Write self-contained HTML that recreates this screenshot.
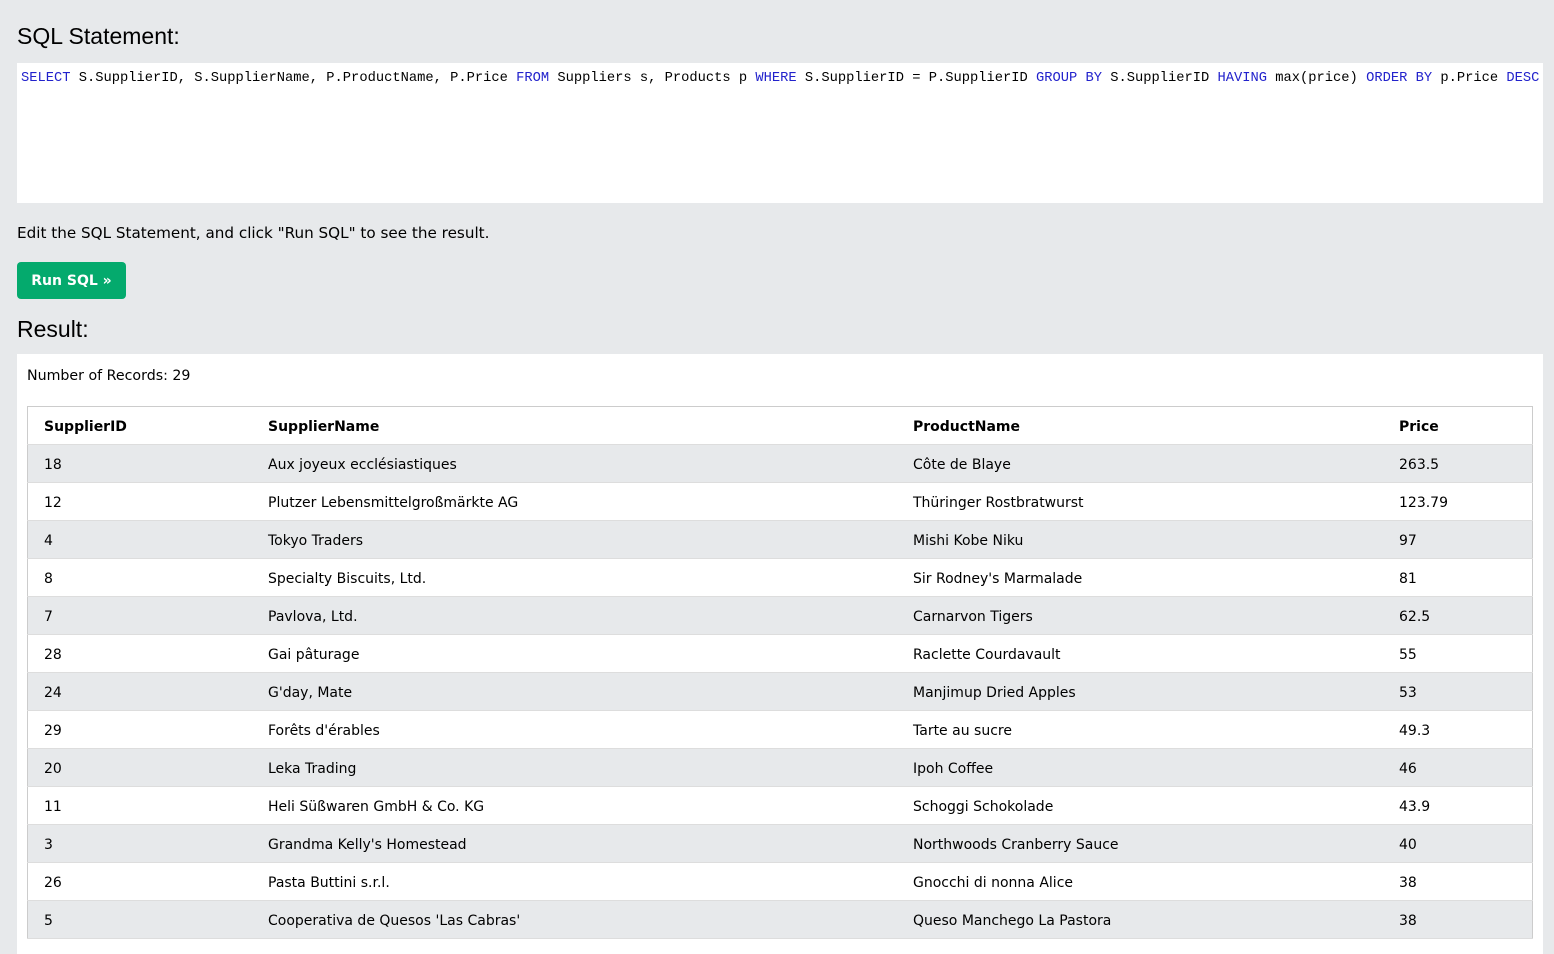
<!DOCTYPE html>
<html><head><meta charset="utf-8"><style>
body{margin:0;background:#e7e9eb;width:1554px;height:940px;overflow:hidden;font-family:"DejaVu Sans",Verdana,sans-serif;font-size:14px;color:#000}
h2{position:absolute;margin:0;font-family:"Liberation Sans",sans-serif;font-weight:normal;font-size:23px;left:17px}
#ta{position:absolute;left:17px;top:63px;width:1526px;height:140px;background:#fff}
#ta pre{margin:0;position:absolute;left:4px;top:8px;font-family:"Liberation Mono",monospace;font-size:13.75px;color:#000;white-space:pre}
.k{color:#2222cc}
#hint{position:absolute;left:17px;top:224px;font-size:15.2px}
#btn{position:absolute;left:17px;top:262px;width:109px;height:37px;background:#04aa6d;border-radius:4px;color:#fff;font-weight:bold;font-size:14px;line-height:38px;text-align:center}
#res{position:absolute;left:17px;top:354px;width:1526px;height:600px;background:#fff}
#num{position:absolute;left:10px;top:14px;font-size:14.2px}
table{position:absolute;left:10px;top:52px;width:1506px;border-collapse:collapse;border:1px solid #ccc}
td,th{height:35px;padding:2px 0 0 16px;text-align:left;border-bottom:1px solid #ddd}
th{font-weight:bold}
tr:nth-child(even) td{background:#e7e9eb}
</style></head><body>
<h2 style="top:23px">SQL Statement:</h2>
<div id="ta"><pre><span class="k">SELECT</span> S.SupplierID, S.SupplierName, P.ProductName, P.Price <span class="k">FROM</span> Suppliers s, Products p <span class="k">WHERE</span> S.SupplierID = P.SupplierID <span class="k">GROUP BY</span> S.SupplierID <span class="k">HAVING</span> max(price) <span class="k">ORDER BY</span> p.Price <span class="k">DESC</span></pre></div>
<div id="hint">Edit the SQL Statement, and click "Run SQL" to see the result.</div>
<div id="btn">Run SQL »</div>
<h2 style="top:316px">Result:</h2>
<div id="res"><div id="num">Number of Records: 29</div>
<table>
<tr><th style="width:208px">SupplierID</th><th style="width:629px">SupplierName</th><th style="width:470px">ProductName</th><th>Price</th></tr>
<tr><td>18</td><td>Aux joyeux ecclésiastiques</td><td>Côte de Blaye</td><td>263.5</td></tr>
<tr><td>12</td><td>Plutzer Lebensmittelgroßmärkte AG</td><td>Thüringer Rostbratwurst</td><td>123.79</td></tr>
<tr><td>4</td><td>Tokyo Traders</td><td>Mishi Kobe Niku</td><td>97</td></tr>
<tr><td>8</td><td>Specialty Biscuits, Ltd.</td><td>Sir Rodney's Marmalade</td><td>81</td></tr>
<tr><td>7</td><td>Pavlova, Ltd.</td><td>Carnarvon Tigers</td><td>62.5</td></tr>
<tr><td>28</td><td>Gai pâturage</td><td>Raclette Courdavault</td><td>55</td></tr>
<tr><td>24</td><td>G'day, Mate</td><td>Manjimup Dried Apples</td><td>53</td></tr>
<tr><td>29</td><td>Forêts d'érables</td><td>Tarte au sucre</td><td>49.3</td></tr>
<tr><td>20</td><td>Leka Trading</td><td>Ipoh Coffee</td><td>46</td></tr>
<tr><td>11</td><td>Heli Süßwaren GmbH &amp; Co. KG</td><td>Schoggi Schokolade</td><td>43.9</td></tr>
<tr><td>3</td><td>Grandma Kelly's Homestead</td><td>Northwoods Cranberry Sauce</td><td>40</td></tr>
<tr><td>26</td><td>Pasta Buttini s.r.l.</td><td>Gnocchi di nonna Alice</td><td>38</td></tr>
<tr><td>5</td><td>Cooperativa de Quesos 'Las Cabras'</td><td>Queso Manchego La Pastora</td><td>38</td></tr>
</table></div>
</body></html>
